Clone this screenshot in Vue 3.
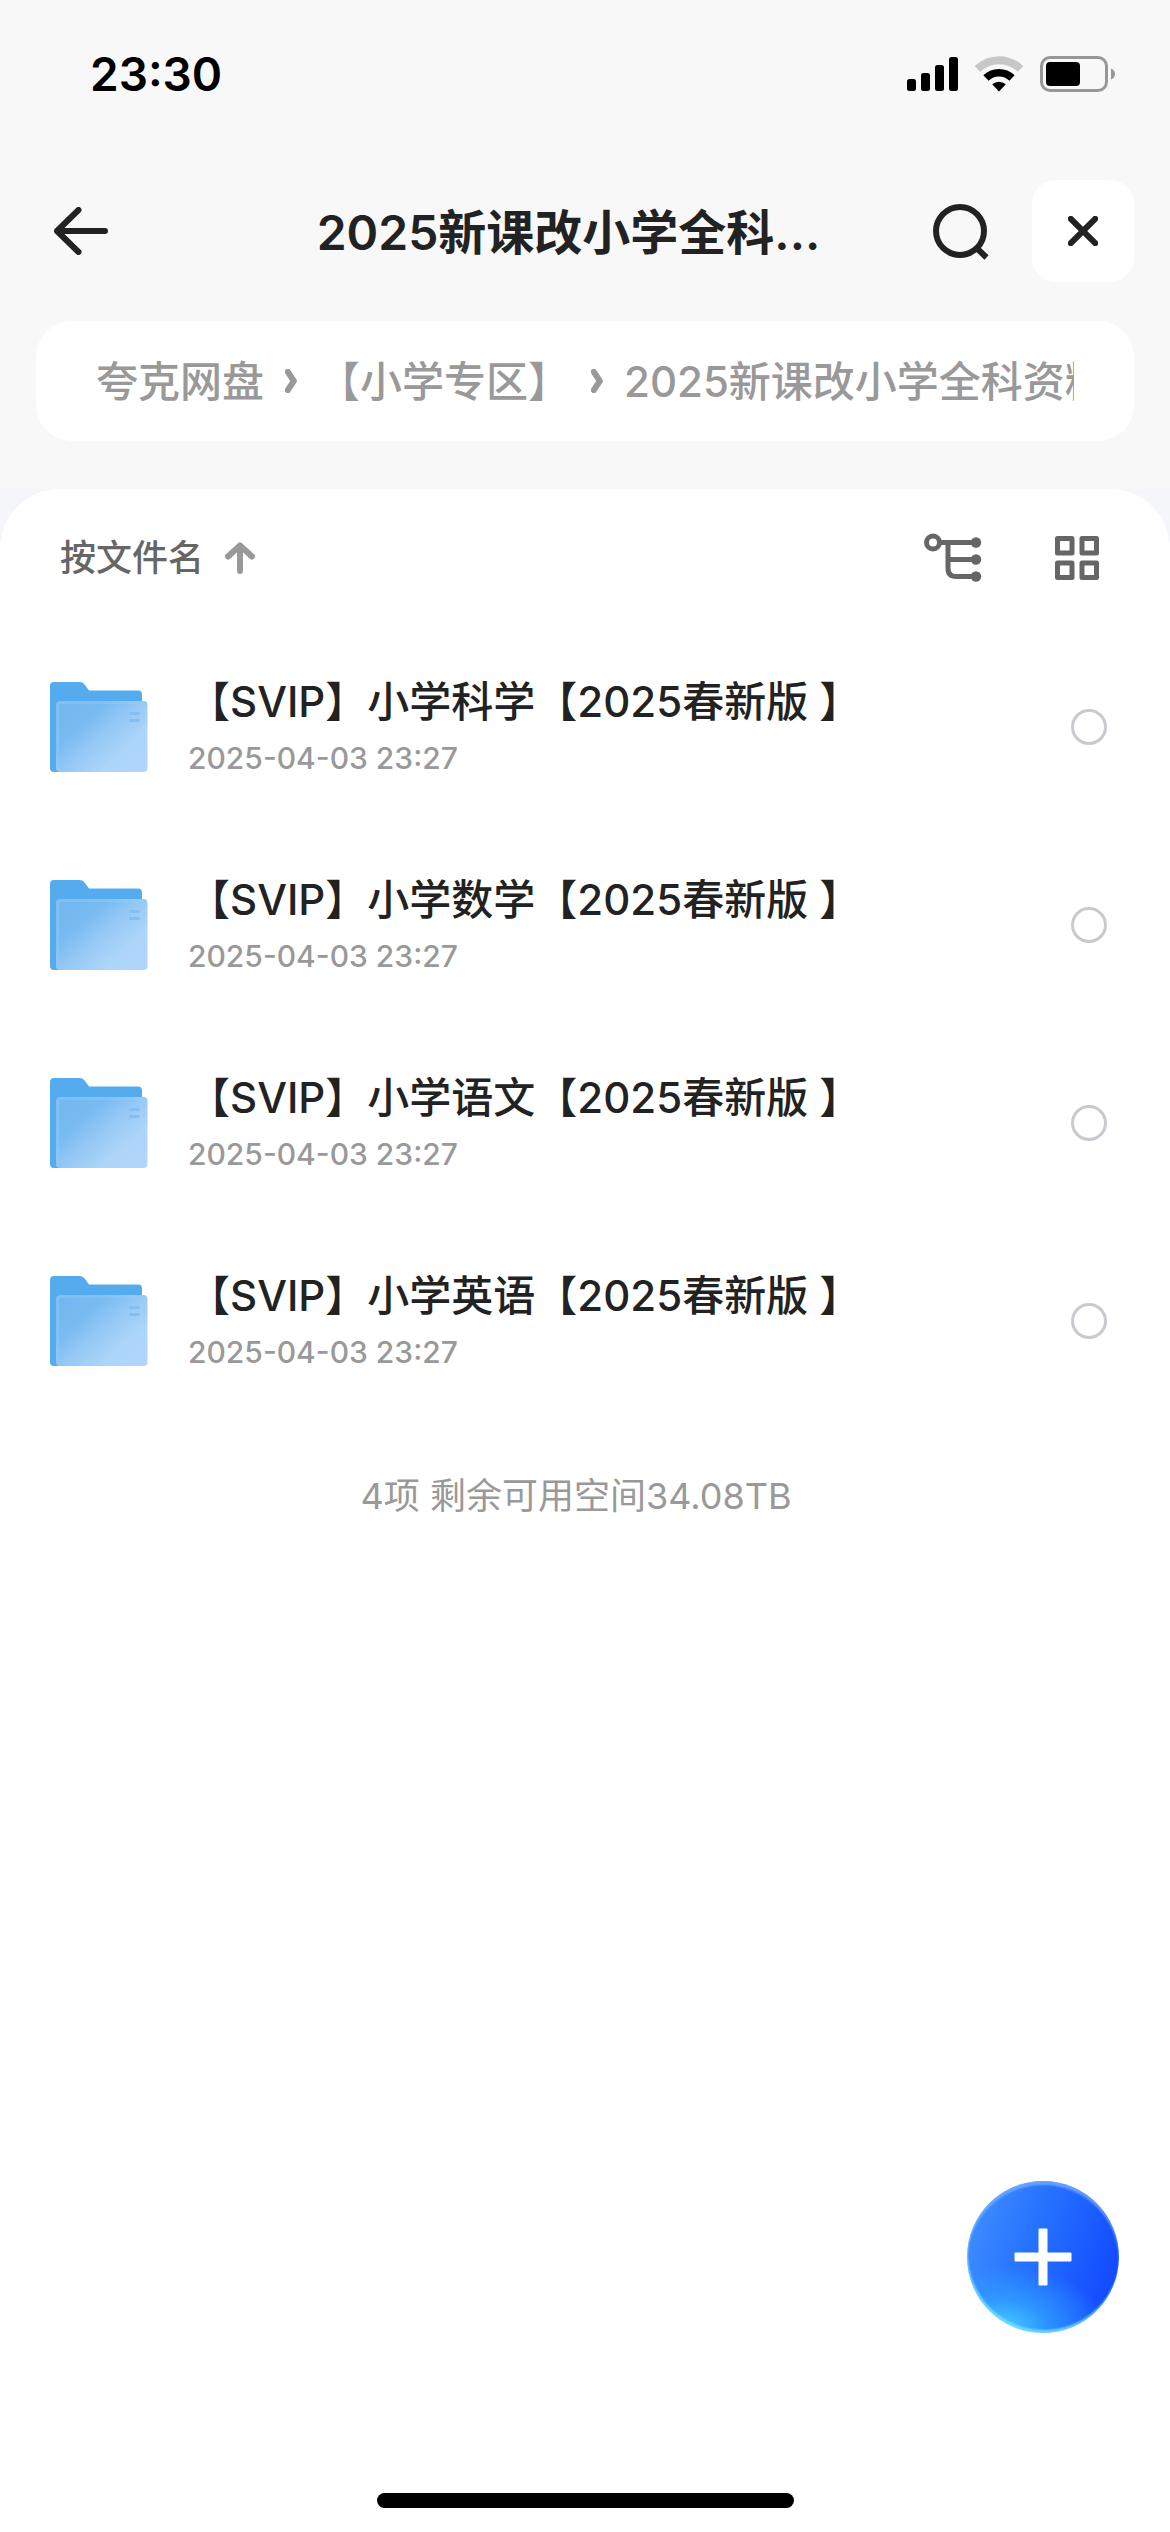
<script setup>
import { ref } from 'vue'

const crumbs = ['夸克网盘', '【小学专区】', '2025新课改小学全科资料']
const folders = ref(
  ['科学', '数学', '语文', '英语'].map((subject) => ({
    name: `【SVIP】小学${subject}【2025春新版 】`,
    time: '2025-04-03 23:27',
    checked: false,
  }))
)
</script>

<template>
  <div class="page">
    <div class="status">
      <span class="clock">23:30</span>
      <div class="indicators">
        <svg width="51" height="36" viewBox="0 0 51 36">
          <rect x="0" y="23" width="9" height="12" rx="2.5" />
          <rect x="14" y="17" width="9" height="18" rx="2.5" />
          <rect x="28" y="9" width="9" height="26" rx="2.5" />
          <rect x="42" y="1" width="9" height="34" rx="2.5" />
        </svg>
        <svg width="50" height="36" viewBox="0 0 50 36" fill="none">
          <path d="M3.5 13 A30.5 30.5 0 0 1 46.500 13" stroke="#c7c7c7" stroke-width="8" />
          <path d="M12 22 A18.500 18.500 0 0 1 38 22" stroke="#000" stroke-width="7.500" />
          <path d="M25 35.500 L18.200 28.300 A10 10 0 0 1 31.800 28.300 Z" fill="#000" />
        </svg>
        <svg width="76" height="36" viewBox="0 0 76 36">
          <rect x="1.500" y="1.500" width="65" height="33" rx="8.500" fill="none" stroke="#979797" stroke-width="3" />
          <rect x="6" y="6" width="34" height="24" rx="4" />
          <path d="M71 12.500 Q75 14 75 18 Q75 22 71 23.500 Z" fill="#979797" />
        </svg>
      </div>
    </div>

    <header class="nav">
      <button class="back" type="button" aria-label="返回">
        <svg width="54" height="48" viewBox="0 0 54 48">
          <path d="M24.500 3 L3 24 L24.500 45 M3 24 H51" />
        </svg>
      </button>
      <h1>2025新课改小学全科...</h1>
      <button class="search" type="button" aria-label="搜索">
        <svg width="57" height="57" viewBox="0 0 57 57">
          <circle cx="27" cy="28" r="24" />
          <path d="M43.500 45 L53.500 54.500" class="butt" />
        </svg>
      </button>
      <button class="close" type="button" aria-label="关闭">
        <svg width="30" height="30" viewBox="0 0 30 30">
          <path d="M2.800 2.800 L27.200 27.200 M27.200 2.800 L2.800 27.200" />
        </svg>
      </button>
    </header>

    <nav class="crumbs" aria-label="路径">
      <div class="trail">
        <template v-for="(crumb, i) in crumbs" :key="crumb">
          <svg v-if="i > 0" width="12" height="24" viewBox="0 0 12 24">
            <path d="M2.800 2.800 L8.800 12 L2.800 21.200" />
          </svg>
          <a href="#">{{ crumb }}</a>
        </template>
      </div>
    </nav>

    <div class="backing">
      <main class="sheet">
        <div class="tools">
          <button class="sort" type="button">
            按文件名
            <svg width="30" height="32" viewBox="0 0 30 32">
              <path d="M15 4 V29 M3 14.500 L15 3.500 L27 14.500" />
            </svg>
          </button>
          <button class="tree" type="button" aria-label="树形视图">
            <svg width="58" height="50" viewBox="0 0 58 50">
              <circle cx="9" cy="9.500" r="6.500" />
              <path d="M16 9.500 H52 M24 9.500 V35 Q24 43.500 32 43.500 H52 M24 26.500 H52" />
              <g class="dots">
                <circle cx="52" cy="9.500" r="5.200" />
                <circle cx="52" cy="26.500" r="5.200" />
                <circle cx="52" cy="43.500" r="5.200" />
              </g>
            </svg>
          </button>
          <button class="grid" type="button" aria-label="网格视图">
            <svg width="44" height="44" viewBox="0 0 44 44">
              <rect x="2.500" y="2.500" width="14.500" height="14.500" />
              <rect x="27" y="2.500" width="14.500" height="14.500" />
              <rect x="2.500" y="27" width="14.500" height="14.500" />
              <rect x="27" y="27" width="14.500" height="14.500" />
            </svg>
          </button>
        </div>

        <ul class="files">
          <li v-for="(folder, i) in folders" :key="folder.name">
            <svg class="folder" width="98" height="90" viewBox="0 0 98 90">
              <defs>
                <linearGradient id="front" x1="0.100" y1="0.150" x2="0.900" y2="0.850">
                  <stop offset="0" stop-color="#73b8f0" />
                  <stop offset="0.250" stop-color="#7abcf1" />
                  <stop offset="0.500" stop-color="#95c8f5" />
                  <stop offset="0.800" stop-color="#acd5f9" />
                  <stop offset="1" stop-color="#afd6fa" />
                </linearGradient>
              </defs>
              <path d="M4 0 H30 Q33 0 35 3 L39 8.500 H88 Q92 8.500 92 12.500 V60 H20 V90 H4 Q0 90 0 86 V4 Q0 0 4 0 Z" fill="#54abee" />
              <rect x="6" y="19" width="91.500" height="71" rx="4" fill="url(#front)" />
              <path d="M7.500 88 V24 Q7.500 20.500 11 20.500 H94" fill="none" stroke="#9ccef5" stroke-opacity="0.350" stroke-width="3" />
              <path d="M79 31.500 H89.500 M79 38.500 H89.500" stroke="#83bff2" stroke-width="3" />
            </svg>
            <label class="info" :for="`pick-${i}`">
              <span class="name">{{ folder.name }}</span>
              <span class="time">{{ folder.time }}</span>
            </label>
            <input :id="`pick-${i}`" v-model="folder.checked" type="checkbox" />
          </li>
        </ul>
        <p class="summary">4项 剩余可用空间34.08TB</p>
      </main>
    </div>

    <button class="add" type="button" aria-label="新建">
      <svg width="58" height="58" viewBox="0 0 58 58">
        <rect x="24.500" y="0.500" width="9" height="57" rx="1" />
        <rect x="0.500" y="24.500" width="57" height="9" rx="1" />
      </svg>
    </button>
    <div class="home-bar"></div>
  </div>
</template>

<style>
body {
  background: #fff;
}
</style>

<style scoped>
.page {
  min-height: 100vh;
  display: flex;
  flex-direction: column;
  background: #f8f8f8;
  color: #222;
  font-family: Inter, "Noto Sans CJK SC", sans-serif;
}
svg {
  display: block;
  flex: none;
}
button {
  border: 0;
  padding: 0;
  background: none;
  font: inherit;
  color: inherit;
  flex: none;
}
.status {
  height: 141px;
  box-sizing: border-box;
  padding: 7px 54px 0 90px;
  display: flex;
  align-items: center;
  justify-content: space-between;
  color: #000;
}
.clock {
  font-size: 46px;
  line-height: 56px;
  font-weight: 600;
}
.indicators {
  display: flex;
  gap: 16px;
}
.nav {
  height: 180px;
  padding: 0 36px 0 54px;
  display: flex;
  align-items: center;
}
.nav svg {
  fill: none;
  stroke: #222;
  stroke-width: 6;
  stroke-linecap: round;
  stroke-linejoin: round;
}
.nav .butt {
  stroke-linecap: butt;
}
.back {
  width: 150px;
}
h1 {
  flex: 1;
  margin: 0;
  padding-top: 3px;
  text-align: center;
  white-space: nowrap;
  font-size: 48px;
  line-height: 60px;
  font-weight: 600;
}
.close {
  width: 102px;
  height: 102px;
  margin-left: 42px;
  border-radius: 24px;
  background: #fff;
  display: flex;
  align-items: center;
  justify-content: center;
}
.crumbs {
  margin: 0 36px 48px;
  padding: 0 60px;
  height: 120px;
  border-radius: 36px;
  background: #fff;
  display: flex;
  align-items: center;
}
.trail {
  flex: 1;
  min-width: 0;
  overflow: hidden;
  display: flex;
  align-items: center;
  gap: 21px;
}
.trail a {
  flex: none;
  padding-top: 2px;
  color: #999;
  text-decoration: none;
  white-space: nowrap;
  font-size: 42px;
  line-height: 60px;
  font-weight: 500;
}
.trail svg {
  fill: none;
  stroke: #999;
  stroke-width: 6;
  stroke-linecap: round;
  stroke-linejoin: round;
}
.backing {
  flex: 1;
  display: flex;
  flex-direction: column;
  background: #f4f6f9;
}
.sheet {
  flex: 1;
  background: #fff;
  border-radius: 60px 60px 0 0;
}
.tools {
  height: 138px;
  padding: 0 71px 0 60px;
  display: flex;
  align-items: center;
}
.sort {
  margin-right: auto;
  display: flex;
  align-items: center;
  gap: 21px;
  color: #666;
  font-size: 36px;
  line-height: 48px;
  font-weight: 500;
}
.sort svg {
  fill: none;
  stroke: #999;
  stroke-width: 6;
  stroke-linecap: round;
  stroke-linejoin: round;
}
.tree svg,
.grid svg {
  fill: none;
  stroke: #666;
  stroke-width: 5;
  stroke-linejoin: round;
}
.tree .dots {
  fill: #666;
  stroke: none;
}
.grid {
  margin-left: 73px;
}
.files {
  list-style: none;
  margin: 0;
  padding: 0;
}
.files li {
  height: 198px;
  box-sizing: border-box;
  padding: 2px 63px 0 50px;
  display: flex;
  align-items: center;
}
.info {
  flex: 1;
  margin-left: 40px;
  display: flex;
  flex-direction: column;
}
.name {
  font-size: 42px;
  line-height: 62px;
  font-weight: 500;
  white-space: nowrap;
}
.time {
  color: #999;
  font-size: 30px;
  line-height: 50px;
  font-weight: 500;
}
.files input {
  appearance: none;
  flex: none;
  margin: 0;
  width: 36px;
  height: 36px;
  border: 3px solid #c9c9cf;
  border-radius: 50%;
}
.files input:checked {
  background: #1a66ff;
  border-color: #1a66ff;
}
.summary {
  margin: 0;
  padding: 53px 18px 0 0;
  text-align: center;
  color: #999;
  font-size: 36px;
  line-height: 48px;
}
.add {
  position: fixed;
  right: 51px;
  bottom: 199px;
  width: 152px;
  height: 152px;
  border-radius: 50%;
  display: flex;
  align-items: center;
  justify-content: center;
  background:
    radial-gradient(ellipse 70% 40% at 22% 96%, #46ccff 0, rgba(50, 165, 255, 0.7) 45%, rgba(30, 110, 255, 0) 100%),
    linear-gradient(108deg, #3e8cff 8%, #2470ff 45%, #1148ff 92%);
  box-shadow:
    inset 0 4px 2px rgba(140, 190, 250, 0.6),
    inset 1px -3px 2px rgba(120, 225, 255, 0.8);
}
.add svg {
  fill: #fff;
}
.home-bar {
  position: fixed;
  left: 50%;
  bottom: 24px;
  width: 417px;
  height: 15px;
  margin-left: -208px;
  border-radius: 8px;
  background: #000;
}
</style>
